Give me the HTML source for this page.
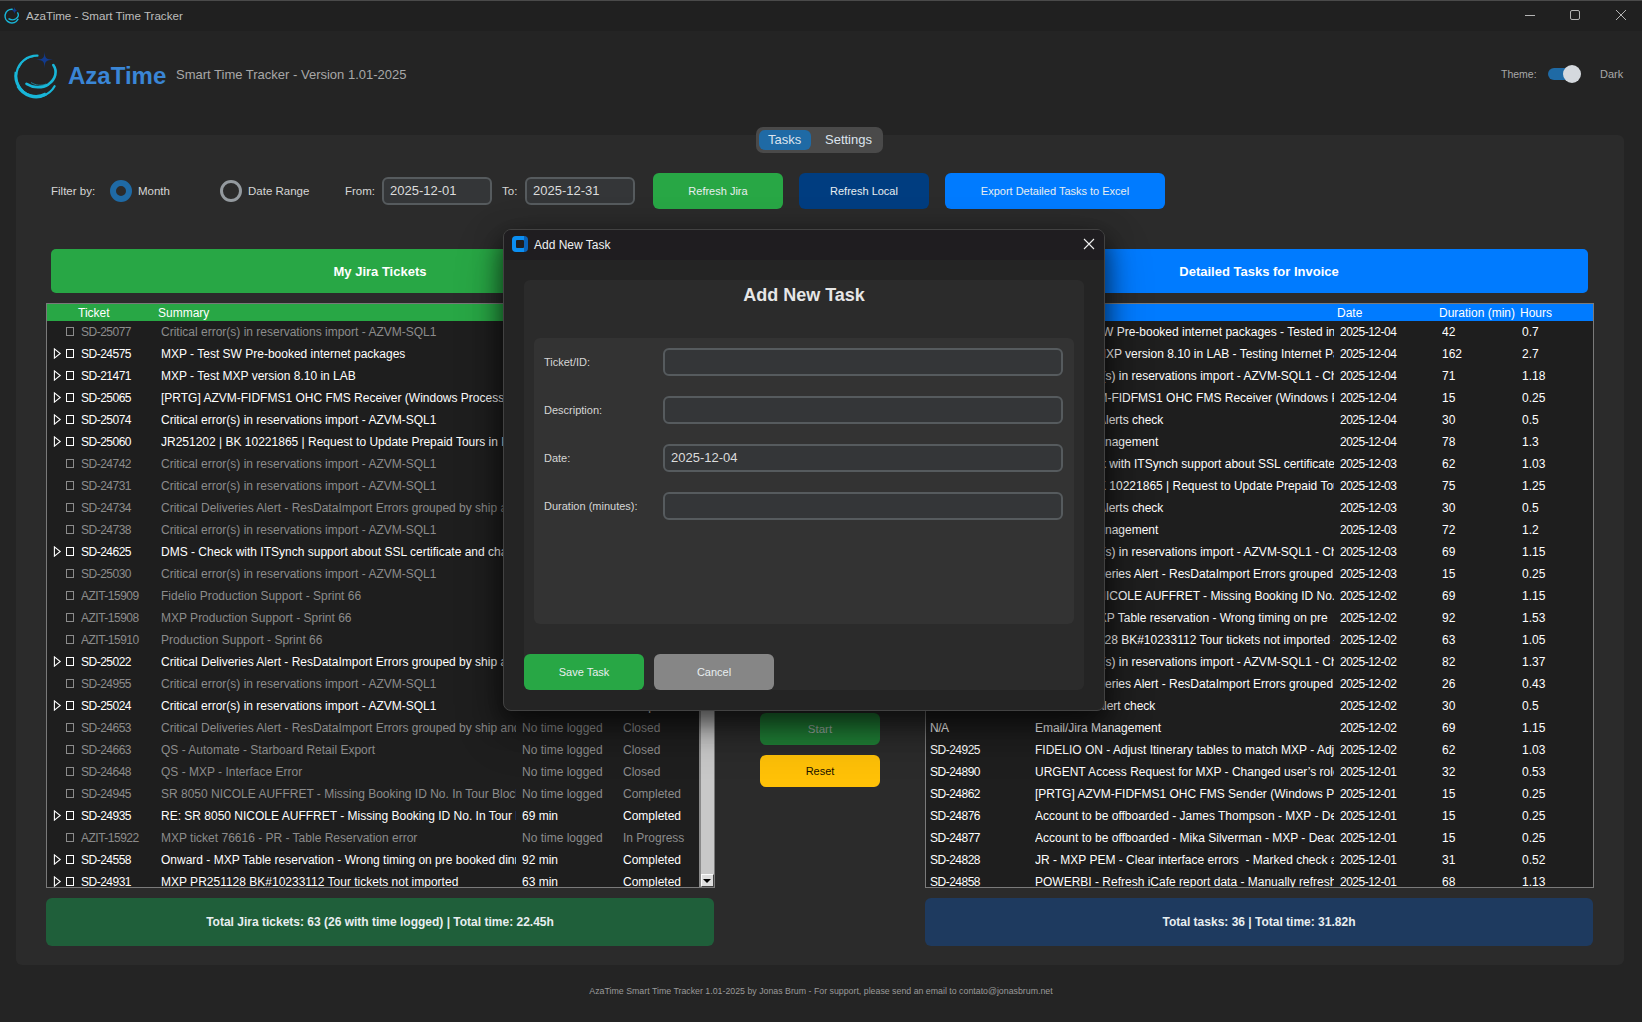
<!DOCTYPE html>
<html><head><meta charset="utf-8">
<style>
*{margin:0;padding:0;box-sizing:border-box}
html,body{width:1642px;height:1022px;overflow:hidden;background:#242424;font-family:"Liberation Sans",sans-serif;color:#d6d6d6}
.a{position:absolute}
.t{position:absolute;white-space:nowrap;line-height:1}
#titlebar{left:0;top:0;width:1642px;height:31px;background:#202020;border-top:1px solid #4a4a4a}
#main{left:16px;top:135px;width:1608px;height:830px;background:#2b2b2b;border-radius:6px}
.btn{position:absolute;border-radius:6px;color:#e8eef0;font-size:11px;display:flex;align-items:center;justify-content:center}
.entry{position:absolute;background:#343638;border:2px solid #565b5e;border-radius:6px;color:#dcdcdc;font-size:13px;padding-left:6px;padding-bottom:2px;display:flex;align-items:center}
.hdr{position:absolute;border-radius:5px;color:#fff;font-weight:bold;font-size:13px;display:flex;align-items:center;justify-content:center}
.tbl{position:absolute;background:#1e1e1e;border:1px solid #7a7a7a;overflow:hidden}
.th{position:absolute;left:0;top:0;right:0;height:17px;color:#fff;font-size:12px}
.row{position:absolute;left:0;right:0;height:22px;font-size:12px;color:#fff}
.row.g{color:#8c8c8c}
.row span.n{letter-spacing:-0.5px}
.row span{position:absolute;top:5px;white-space:pre;overflow:hidden;line-height:13px}
.arr{position:absolute;left:6px;top:5px;width:9px;height:11px}
.cb{position:absolute;left:19px;top:6px;width:8px;height:9px;border:1px solid #fff}
.g .cb{border-color:#8c8c8c}
.sb{position:absolute;left:652px;top:0;width:16px;bottom:0;background:#c8c8c8;border-left:2px solid #8a8a8a;border-right:1px solid #f0f0f0}
.sbdn{position:absolute;left:0;right:0;bottom:0;height:13px;background:#dedede;border-left:1px solid #fafafa;border-top:1px solid #fafafa;border-right:1px solid #404040;border-bottom:1px solid #404040}
.sbdn:after{content:"";position:absolute;left:1px;top:4px;border-top:4px solid #000;border-left:4px solid transparent;border-right:4px solid transparent}
.total{position:absolute;border-radius:6px;color:#e8eef0;font-weight:bold;font-size:12px;display:flex;align-items:center;justify-content:center}
</style></head>
<body>
<div id="titlebar" class="a"></div>
<div class="t" style="left:26px;top:10px;font-size:11.6px;color:#bdbdbd">AzaTime - Smart Time Tracker</div>

<svg class="a" style="left:10px;top:46px" width="54" height="54" viewBox="0 0 54 54">
<path d="M27.5 9.6 A20.5 20.5 0 1 0 44.6 40.2" fill="none" stroke="#18b6d8" stroke-width="2.2" stroke-linecap="round"/>
<path d="M8 40 A20.5 20.5 0 0 0 36 48" fill="none" stroke="#18b6d8" stroke-width="3.4"/>
<path d="M6 26 A20.5 20.5 0 0 0 9 41" fill="none" stroke="#18b6d8" stroke-width="2.8"/>
<path d="M24 10.6 A19 19 0 0 0 9 22" fill="none" stroke="#18b6d8" stroke-width="1" opacity="0.8"/>
<path d="M43.3 19 C47.5 25 46 33 38.5 38.3 C32 42.6 23.5 42.2 16.5 37.8" fill="none" stroke="#18b6d8" stroke-width="2.6" stroke-linecap="round"/>
<path d="M21 36.5 C26 39.5 31 40 36 38" fill="none" stroke="#18b6d8" stroke-width="0.9" opacity="0.7"/>
<path d="M34.6 5.2 C34.8 12.2 36.1 13.5 43 13.7 C36.1 13.9 34.8 15.2 34.6 22.2 C34.4 15.2 33.1 13.9 26.2 13.7 C33.1 13.5 34.4 12.2 34.6 5.2Z" fill="#123a8c"/>
</svg>
<svg class="a" style="left:3px;top:6px" width="18" height="18" viewBox="0 0 54 54">
<path d="M27.5 9.6 A20.5 20.5 0 1 0 44.6 40.2" fill="none" stroke="#18b6d8" stroke-width="4.5" stroke-linecap="round"/>
<path d="M43.3 19 C47.5 25 46 33 38.5 38.3 C32 42.6 23.5 42.2 16.5 37.8" fill="none" stroke="#18b6d8" stroke-width="4"/>
<path d="M34.6 3 Q35.5 12.8 44 13.7 Q35.5 14.6 34.6 24 Q33.7 14.6 25 13.7 Q33.7 12.8 34.6 3Z" fill="#123a8c"/>
</svg>
<div class="t" style="left:68px;top:64px;font-size:24px;font-weight:bold;color:#3a86d6">AzaTime</div>
<div class="t" style="left:176px;top:68px;font-size:13px;color:#a8a8a8">Smart Time Tracker - Version 1.01-2025</div>

<div class="t" style="left:1501px;top:69px;font-size:10.5px;color:#a8a8a8">Theme:</div>
<div class="a" style="left:1548px;top:68px;width:32px;height:12px;border-radius:6px;background:#1f6aa5"></div>
<div class="a" style="left:1563px;top:65px;width:18px;height:18px;border-radius:9px;background:#d5d9de"></div>
<div class="t" style="left:1600px;top:69px;font-size:11px;color:#a8a8a8">Dark</div>

<svg class="a" style="left:1520px;top:5px" width="112" height="20" viewBox="0 0 112 20">
<path d="M5 10.5H15" stroke="#b4b4b4" stroke-width="1"/>
<rect x="50.5" y="5.5" width="9" height="9" rx="1.5" fill="none" stroke="#b4b4b4" stroke-width="1"/>
<path d="M96 5L106 15M106 5L96 15" stroke="#b4b4b4" stroke-width="1"/>
</svg>
<div id="main" class="a"></div>
<div class="a" style="left:756px;top:127px;width:127px;height:26px;border-radius:7px;background:#4a4a4a"></div>
<div class="a" style="left:759px;top:130px;width:52px;height:20px;border-radius:6px;background:#1f6aa5"></div>
<div class="t" style="left:768px;top:133px;font-size:13px;color:#dce4ee">Tasks</div>
<div class="t" style="left:825px;top:133px;font-size:13px;color:#dce4ee">Settings</div>

<!-- filter row -->
<div class="t" style="left:51px;top:186px;font-size:11.5px;color:#d6d6d6">Filter by:</div>
<div class="a" style="left:110px;top:180px;width:22px;height:22px;border-radius:11px;border:6px solid #1f6aa5"></div>
<div class="t" style="left:138px;top:186px;font-size:11.5px;color:#d6d6d6">Month</div>
<div class="a" style="left:220px;top:180px;width:22px;height:22px;border-radius:11px;border:3px solid #949a9f"></div>
<div class="t" style="left:248px;top:186px;font-size:11.5px;color:#d6d6d6">Date Range</div>
<div class="t" style="left:345px;top:186px;font-size:11.5px;color:#d6d6d6">From:</div>
<div class="entry" style="left:382px;top:177px;width:110px;height:28px">2025-12-01</div>
<div class="t" style="left:502px;top:186px;font-size:11.5px;color:#d6d6d6">To:</div>
<div class="entry" style="left:525px;top:177px;width:110px;height:28px">2025-12-31</div>
<div class="btn" style="left:653px;top:173px;width:130px;height:36px;background:#28a745">Refresh Jira</div>
<div class="btn" style="left:799px;top:173px;width:130px;height:36px;background:#003d80">Refresh Local</div>
<div class="btn" style="left:945px;top:173px;width:220px;height:36px;background:#007bff">Export Detailed Tasks to Excel</div>

<div class="hdr" style="left:51px;top:249px;width:658px;height:44px;background:#28a745">My Jira Tickets</div>
<div class="hdr" style="left:930px;top:249px;width:658px;height:44px;background:#007bff">Detailed Tasks for Invoice</div>

<div class="tbl" style="left:46px;top:303px;width:669px;height:585px">
<div class="th" style="background:#28a745"><span class="t" style="left:31px;top:3px">Ticket</span><span class="t" style="left:111px;top:3px">Summary</span></div>
<div class="row g" style="top:17px"><i class="cb"></i><span class="n" style="left:34px;width:76px">SD-25077</span><span class="sm" style="left:114px;width:355px">Critical error(s) in reservations import - AZVM-SQL1</span><span style="left:475px;width:100px">No time logged</span><span style="left:576px;width:90px">Closed</span></div>
<div class="row" style="top:39px"><svg class="arr" viewBox="0 0 9 11"><path d="M1.4 0.9L7.2 5.5L1.4 10.1Z" fill="none" stroke="#fff" stroke-width="1.1"/></svg><i class="cb"></i><span class="n" style="left:34px;width:76px">SD-24575</span><span class="sm" style="left:114px;width:355px">MXP - Test SW Pre-booked internet packages</span><span style="left:475px;width:100px">42 min</span><span style="left:576px;width:90px">In Progress</span></div>
<div class="row" style="top:61px"><svg class="arr" viewBox="0 0 9 11"><path d="M1.4 0.9L7.2 5.5L1.4 10.1Z" fill="none" stroke="#fff" stroke-width="1.1"/></svg><i class="cb"></i><span class="n" style="left:34px;width:76px">SD-21471</span><span class="sm" style="left:114px;width:355px">MXP - Test MXP version 8.10 in LAB</span><span style="left:475px;width:100px">162 min</span><span style="left:576px;width:90px">In Progress</span></div>
<div class="row" style="top:83px"><svg class="arr" viewBox="0 0 9 11"><path d="M1.4 0.9L7.2 5.5L1.4 10.1Z" fill="none" stroke="#fff" stroke-width="1.1"/></svg><i class="cb"></i><span class="n" style="left:34px;width:76px">SD-25065</span><span class="sm" style="left:114px;width:355px">[PRTG] AZVM-FIDFMS1 OHC FMS Receiver (Windows Process) Down</span><span style="left:475px;width:100px">15 min</span><span style="left:576px;width:90px">Completed</span></div>
<div class="row" style="top:105px"><svg class="arr" viewBox="0 0 9 11"><path d="M1.4 0.9L7.2 5.5L1.4 10.1Z" fill="none" stroke="#fff" stroke-width="1.1"/></svg><i class="cb"></i><span class="n" style="left:34px;width:76px">SD-25074</span><span class="sm" style="left:114px;width:355px">Critical error(s) in reservations import - AZVM-SQL1</span><span style="left:475px;width:100px">71 min</span><span style="left:576px;width:90px">Completed</span></div>
<div class="row" style="top:127px"><svg class="arr" viewBox="0 0 9 11"><path d="M1.4 0.9L7.2 5.5L1.4 10.1Z" fill="none" stroke="#fff" stroke-width="1.1"/></svg><i class="cb"></i><span class="n" style="left:34px;width:76px">SD-25060</span><span class="sm" style="left:114px;width:355px">JR251202 | BK 10221865 | Request to Update Prepaid Tours in PowerBI</span><span style="left:475px;width:100px">75 min</span><span style="left:576px;width:90px">Completed</span></div>
<div class="row g" style="top:149px"><i class="cb"></i><span class="n" style="left:34px;width:76px">SD-24742</span><span class="sm" style="left:114px;width:355px">Critical error(s) in reservations import - AZVM-SQL1</span><span style="left:475px;width:100px">No time logged</span><span style="left:576px;width:90px">Closed</span></div>
<div class="row g" style="top:171px"><i class="cb"></i><span class="n" style="left:34px;width:76px">SD-24731</span><span class="sm" style="left:114px;width:355px">Critical error(s) in reservations import - AZVM-SQL1</span><span style="left:475px;width:100px">No time logged</span><span style="left:576px;width:90px">Closed</span></div>
<div class="row g" style="top:193px"><i class="cb"></i><span class="n" style="left:34px;width:76px">SD-24734</span><span class="sm" style="left:114px;width:355px">Critical Deliveries Alert - ResDataImport Errors grouped by ship and</span><span style="left:475px;width:100px">No time logged</span><span style="left:576px;width:90px">Closed</span></div>
<div class="row g" style="top:215px"><i class="cb"></i><span class="n" style="left:34px;width:76px">SD-24738</span><span class="sm" style="left:114px;width:355px">Critical error(s) in reservations import - AZVM-SQL1</span><span style="left:475px;width:100px">No time logged</span><span style="left:576px;width:90px">Closed</span></div>
<div class="row" style="top:237px"><svg class="arr" viewBox="0 0 9 11"><path d="M1.4 0.9L7.2 5.5L1.4 10.1Z" fill="none" stroke="#fff" stroke-width="1.1"/></svg><i class="cb"></i><span class="n" style="left:34px;width:76px">SD-24625</span><span class="sm" style="left:114px;width:355px">DMS - Check with ITSynch support about SSL certificate and change</span><span style="left:475px;width:100px">62 min</span><span style="left:576px;width:90px">Completed</span></div>
<div class="row g" style="top:259px"><i class="cb"></i><span class="n" style="left:34px;width:76px">SD-25030</span><span class="sm" style="left:114px;width:355px">Critical error(s) in reservations import - AZVM-SQL1</span><span style="left:475px;width:100px">No time logged</span><span style="left:576px;width:90px">Closed</span></div>
<div class="row g" style="top:281px"><i class="cb"></i><span class="n" style="left:34px;width:76px">AZIT-15909</span><span class="sm" style="left:114px;width:355px">Fidelio Production Support - Sprint 66</span><span style="left:475px;width:100px">No time logged</span><span style="left:576px;width:90px">In Progress</span></div>
<div class="row g" style="top:303px"><i class="cb"></i><span class="n" style="left:34px;width:76px">AZIT-15908</span><span class="sm" style="left:114px;width:355px">MXP Production Support - Sprint 66</span><span style="left:475px;width:100px">No time logged</span><span style="left:576px;width:90px">In Progress</span></div>
<div class="row g" style="top:325px"><i class="cb"></i><span class="n" style="left:34px;width:76px">AZIT-15910</span><span class="sm" style="left:114px;width:355px">Production Support - Sprint 66</span><span style="left:475px;width:100px">No time logged</span><span style="left:576px;width:90px">In Progress</span></div>
<div class="row" style="top:347px"><svg class="arr" viewBox="0 0 9 11"><path d="M1.4 0.9L7.2 5.5L1.4 10.1Z" fill="none" stroke="#fff" stroke-width="1.1"/></svg><i class="cb"></i><span class="n" style="left:34px;width:76px">SD-25022</span><span class="sm" style="left:114px;width:355px">Critical Deliveries Alert - ResDataImport Errors grouped by ship and</span><span style="left:475px;width:100px">15 min</span><span style="left:576px;width:90px">Completed</span></div>
<div class="row g" style="top:369px"><i class="cb"></i><span class="n" style="left:34px;width:76px">SD-24955</span><span class="sm" style="left:114px;width:355px">Critical error(s) in reservations import - AZVM-SQL1</span><span style="left:475px;width:100px">No time logged</span><span style="left:576px;width:90px">Closed</span></div>
<div class="row" style="top:391px"><svg class="arr" viewBox="0 0 9 11"><path d="M1.4 0.9L7.2 5.5L1.4 10.1Z" fill="none" stroke="#fff" stroke-width="1.1"/></svg><i class="cb"></i><span class="n" style="left:34px;width:76px">SD-25024</span><span class="sm" style="left:114px;width:355px">Critical error(s) in reservations import - AZVM-SQL1</span><span style="left:475px;width:100px">82 min</span><span style="left:576px;width:90px">Completed</span></div>
<div class="row g" style="top:413px"><i class="cb"></i><span class="n" style="left:34px;width:76px">SD-24653</span><span class="sm" style="left:114px;width:355px">Critical Deliveries Alert - ResDataImport Errors grouped by ship and</span><span style="left:475px;width:100px">No time logged</span><span style="left:576px;width:90px">Closed</span></div>
<div class="row g" style="top:435px"><i class="cb"></i><span class="n" style="left:34px;width:76px">SD-24663</span><span class="sm" style="left:114px;width:355px">QS - Automate - Starboard Retail Export</span><span style="left:475px;width:100px">No time logged</span><span style="left:576px;width:90px">Closed</span></div>
<div class="row g" style="top:457px"><i class="cb"></i><span class="n" style="left:34px;width:76px">SD-24648</span><span class="sm" style="left:114px;width:355px">QS - MXP - Interface Error</span><span style="left:475px;width:100px">No time logged</span><span style="left:576px;width:90px">Closed</span></div>
<div class="row g" style="top:479px"><i class="cb"></i><span class="n" style="left:34px;width:76px">SD-24945</span><span class="sm" style="left:114px;width:355px">SR 8050 NICOLE AUFFRET - Missing Booking ID No. In Tour Block Manager</span><span style="left:475px;width:100px">No time logged</span><span style="left:576px;width:90px">Completed</span></div>
<div class="row" style="top:501px"><svg class="arr" viewBox="0 0 9 11"><path d="M1.4 0.9L7.2 5.5L1.4 10.1Z" fill="none" stroke="#fff" stroke-width="1.1"/></svg><i class="cb"></i><span class="n" style="left:34px;width:76px">SD-24935</span><span class="sm" style="left:114px;width:355px">RE: SR 8050 NICOLE AUFFRET - Missing Booking ID No. In Tour Block Manager</span><span style="left:475px;width:100px">69 min</span><span style="left:576px;width:90px">Completed</span></div>
<div class="row g" style="top:523px"><i class="cb"></i><span class="n" style="left:34px;width:76px">AZIT-15922</span><span class="sm" style="left:114px;width:355px">MXP ticket 76616 - PR - Table Reservation error</span><span style="left:475px;width:100px">No time logged</span><span style="left:576px;width:90px">In Progress</span></div>
<div class="row" style="top:545px"><svg class="arr" viewBox="0 0 9 11"><path d="M1.4 0.9L7.2 5.5L1.4 10.1Z" fill="none" stroke="#fff" stroke-width="1.1"/></svg><i class="cb"></i><span class="n" style="left:34px;width:76px">SD-24558</span><span class="sm" style="left:114px;width:355px">Onward - MXP Table reservation - Wrong timing on pre booked dinner</span><span style="left:475px;width:100px">92 min</span><span style="left:576px;width:90px">Completed</span></div>
<div class="row" style="top:567px"><svg class="arr" viewBox="0 0 9 11"><path d="M1.4 0.9L7.2 5.5L1.4 10.1Z" fill="none" stroke="#fff" stroke-width="1.1"/></svg><i class="cb"></i><span class="n" style="left:34px;width:76px">SD-24931</span><span class="sm" style="left:114px;width:355px">MXP PR251128 BK#10233112 Tour tickets not imported</span><span style="left:475px;width:100px">63 min</span><span style="left:576px;width:90px">Completed</span></div>
<div class="sb"><div class="sbdn"></div></div>
</div>
<div class="tbl" style="left:925px;top:303px;width:669px;height:585px">
<div class="th" style="background:#007bff"><span class="t" style="left:411px;top:3px">Date</span><span class="t" style="left:513px;top:3px">Duration (min)</span><span class="t" style="left:594px;top:3px">Hours</span></div>
<div class="row" style="top:17px"><span class="n" style="left:4px;width:100px">SD-24575</span><span class="sm" style="left:176.0px;width:232.0px">W Pre-booked internet packages - Tested in</span><span class="n" style="left:414px;width:100px">2025-12-04</span><span style="left:516px;width:70px">42</span><span style="left:596px;width:70px">0.7</span></div>
<div class="row" style="top:39px"><span class="n" style="left:4px;width:100px">SD-21471</span><span class="sm" style="left:170.0px;width:238.0px">MXP version 8.10 in LAB - Testing Internet Pa</span><span class="n" style="left:414px;width:100px">2025-12-04</span><span style="left:516px;width:70px">162</span><span style="left:596px;width:70px">2.7</span></div>
<div class="row" style="top:61px"><span class="n" style="left:4px;width:100px">SD-25074</span><span class="sm" style="left:175.5px;width:232.5px">(s) in reservations import - AZVM-SQL1 - Ch</span><span class="n" style="left:414px;width:100px">2025-12-04</span><span style="left:516px;width:70px">71</span><span style="left:596px;width:70px">1.18</span></div>
<div class="row" style="top:83px"><span class="n" style="left:4px;width:100px">SD-25065</span><span class="sm" style="left:171.4px;width:236.6px">M-FIDFMS1 OHC FMS Receiver (Windows Pr</span><span class="n" style="left:414px;width:100px">2025-12-04</span><span style="left:516px;width:70px">15</span><span style="left:596px;width:70px">0.25</span></div>
<div class="row" style="top:105px"><span class="n" style="left:4px;width:100px">N/A</span><span class="sm" style="left:172.0px;width:236.0px">Alerts check</span><span class="n" style="left:414px;width:100px">2025-12-04</span><span style="left:516px;width:70px">30</span><span style="left:596px;width:70px">0.5</span></div>
<div class="row" style="top:127px"><span class="n" style="left:4px;width:100px">N/A</span><span class="sm" style="left:172.3px;width:235.7px">anagement</span><span class="n" style="left:414px;width:100px">2025-12-04</span><span style="left:516px;width:70px">78</span><span style="left:596px;width:70px">1.3</span></div>
<div class="row" style="top:149px"><span class="n" style="left:4px;width:100px">SD-24625</span><span class="sm" style="left:174.0px;width:234.0px">k with ITSynch support about SSL certificate</span><span class="n" style="left:414px;width:100px">2025-12-03</span><span style="left:516px;width:70px">62</span><span style="left:596px;width:70px">1.03</span></div>
<div class="row" style="top:171px"><span class="n" style="left:4px;width:100px">SD-25060</span><span class="sm" style="left:172.0px;width:236.0px">K 10221865 | Request to Update Prepaid Tour</span><span class="n" style="left:414px;width:100px">2025-12-03</span><span style="left:516px;width:70px">75</span><span style="left:596px;width:70px">1.25</span></div>
<div class="row" style="top:193px"><span class="n" style="left:4px;width:100px">N/A</span><span class="sm" style="left:172.0px;width:236.0px">Alerts check</span><span class="n" style="left:414px;width:100px">2025-12-03</span><span style="left:516px;width:70px">30</span><span style="left:596px;width:70px">0.5</span></div>
<div class="row" style="top:215px"><span class="n" style="left:4px;width:100px">N/A</span><span class="sm" style="left:172.3px;width:235.7px">anagement</span><span class="n" style="left:414px;width:100px">2025-12-03</span><span style="left:516px;width:70px">72</span><span style="left:596px;width:70px">1.2</span></div>
<div class="row" style="top:237px"><span class="n" style="left:4px;width:100px">SD-25024</span><span class="sm" style="left:175.5px;width:232.5px">(s) in reservations import - AZVM-SQL1 - Ch</span><span class="n" style="left:414px;width:100px">2025-12-03</span><span style="left:516px;width:70px">69</span><span style="left:596px;width:70px">1.15</span></div>
<div class="row" style="top:259px"><span class="n" style="left:4px;width:100px">SD-25022</span><span class="sm" style="left:173.0px;width:235.0px">veries Alert - ResDataImport Errors grouped b</span><span class="n" style="left:414px;width:100px">2025-12-03</span><span style="left:516px;width:70px">15</span><span style="left:596px;width:70px">0.25</span></div>
<div class="row" style="top:281px"><span class="n" style="left:4px;width:100px">SD-24935</span><span class="sm" style="left:171.3px;width:236.7px">NICOLE AUFFRET - Missing Booking ID No. I</span><span class="n" style="left:414px;width:100px">2025-12-02</span><span style="left:516px;width:70px">69</span><span style="left:596px;width:70px">1.15</span></div>
<div class="row" style="top:303px"><span class="n" style="left:4px;width:100px">SD-24558</span><span class="sm" style="left:172.8px;width:235.2px">XP Table reservation - Wrong timing on pre</span><span class="n" style="left:414px;width:100px">2025-12-02</span><span style="left:516px;width:70px">92</span><span style="left:596px;width:70px">1.53</span></div>
<div class="row" style="top:325px"><span class="n" style="left:4px;width:100px">SD-24931</span><span class="sm" style="left:171.8px;width:236.2px">128 BK#10233112 Tour tickets not imported -</span><span class="n" style="left:414px;width:100px">2025-12-02</span><span style="left:516px;width:70px">63</span><span style="left:596px;width:70px">1.05</span></div>
<div class="row" style="top:347px"><span class="n" style="left:4px;width:100px">SD-25024</span><span class="sm" style="left:175.5px;width:232.5px">(s) in reservations import - AZVM-SQL1 - Ch</span><span class="n" style="left:414px;width:100px">2025-12-02</span><span style="left:516px;width:70px">82</span><span style="left:596px;width:70px">1.37</span></div>
<div class="row" style="top:369px"><span class="n" style="left:4px;width:100px">SD-25022</span><span class="sm" style="left:173.0px;width:235.0px">veries Alert - ResDataImport Errors grouped b</span><span class="n" style="left:414px;width:100px">2025-12-02</span><span style="left:516px;width:70px">26</span><span style="left:596px;width:70px">0.43</span></div>
<div class="row" style="top:391px"><span class="n" style="left:4px;width:100px">N/A</span><span class="sm" style="left:170.0px;width:238.0px">Alert check</span><span class="n" style="left:414px;width:100px">2025-12-02</span><span style="left:516px;width:70px">30</span><span style="left:596px;width:70px">0.5</span></div>
<div class="row" style="top:413px"><span class="n" style="left:4px;width:100px">N/A</span><span class="sm" style="left:109px;width:299px">Email/Jira Management</span><span class="n" style="left:414px;width:100px">2025-12-02</span><span style="left:516px;width:70px">69</span><span style="left:596px;width:70px">1.15</span></div>
<div class="row" style="top:435px"><span class="n" style="left:4px;width:100px">SD-24925</span><span class="sm" style="left:109px;width:299px">FIDELIO ON - Adjust Itinerary tables to match MXP - Adjusted</span><span class="n" style="left:414px;width:100px">2025-12-02</span><span style="left:516px;width:70px">62</span><span style="left:596px;width:70px">1.03</span></div>
<div class="row" style="top:457px"><span class="n" style="left:4px;width:100px">SD-24890</span><span class="sm" style="left:109px;width:299px">URGENT Access Request for MXP - Changed user’s role to admin</span><span class="n" style="left:414px;width:100px">2025-12-01</span><span style="left:516px;width:70px">32</span><span style="left:596px;width:70px">0.53</span></div>
<div class="row" style="top:479px"><span class="n" style="left:4px;width:100px">SD-24862</span><span class="sm" style="left:109px;width:299px">[PRTG] AZVM-FIDFMS1 OHC FMS Sender (Windows Process) Down</span><span class="n" style="left:414px;width:100px">2025-12-01</span><span style="left:516px;width:70px">15</span><span style="left:596px;width:70px">0.25</span></div>
<div class="row" style="top:501px"><span class="n" style="left:4px;width:100px">SD-24876</span><span class="sm" style="left:109px;width:299px">Account to be offboarded - James Thompson - MXP - Deactivated</span><span class="n" style="left:414px;width:100px">2025-12-01</span><span style="left:516px;width:70px">15</span><span style="left:596px;width:70px">0.25</span></div>
<div class="row" style="top:523px"><span class="n" style="left:4px;width:100px">SD-24877</span><span class="sm" style="left:109px;width:299px">Account to be offboarded - Mika Silverman - MXP - Deactivated</span><span class="n" style="left:414px;width:100px">2025-12-01</span><span style="left:516px;width:70px">15</span><span style="left:596px;width:70px">0.25</span></div>
<div class="row" style="top:545px"><span class="n" style="left:4px;width:100px">SD-24828</span><span class="sm" style="left:109px;width:299px">JR - MXP PEM - Clear interface errors  - Marked check as done</span><span class="n" style="left:414px;width:100px">2025-12-01</span><span style="left:516px;width:70px">31</span><span style="left:596px;width:70px">0.52</span></div>
<div class="row" style="top:567px"><span class="n" style="left:4px;width:100px">SD-24858</span><span class="sm" style="left:109px;width:299px">POWERBI - Refresh iCafe report data - Manually refreshed data</span><span class="n" style="left:414px;width:100px">2025-12-01</span><span style="left:516px;width:70px">68</span><span style="left:596px;width:70px">1.13</span></div>
</div>

<div class="btn" style="left:760px;top:713px;width:120px;height:32px;background:#1f7d35;color:#9aa8a0;font-size:11.5px">Start</div>
<div class="btn" style="left:760px;top:755px;width:120px;height:32px;background:#ffc107;color:#1a1200;font-size:11px">Reset</div>

<div class="total" style="left:46px;top:898px;width:668px;height:48px;background:#1f5f3a">Total Jira tickets: 63 (26 with time logged) | Total time: 22.45h</div>
<div class="total" style="left:925px;top:898px;width:668px;height:48px;background:#1e3a5f">Total tasks: 36 | Total time: 31.82h</div>

<div class="t" style="left:0;width:1642px;text-align:center;top:987px;font-size:8.8px;color:#9a9a9a">AzaTime Smart Time Tracker 1.01-2025 by Jonas Brum - For support, please send an email to contato@jonasbrum.net</div>

<div class="a" style="left:503px;top:229px;width:602px;height:482px;border-radius:8px;background:#242424;border:1px solid #424242;box-shadow:0 10px 24px 2px rgba(0,0,0,0.55),0 18px 48px rgba(0,0,0,0.3);overflow:hidden">
  <div class="a" style="left:0;top:0;width:600px;height:30px;background:#1f1d20"></div>
</div>
<div class="a" style="left:512px;top:236px;width:16px;height:16px;border-radius:4px;background:linear-gradient(90deg,#0b8ef2 76%,#0a62b8 76%)"></div>
<div class="a" style="left:516px;top:240px;width:8px;height:8px;border-radius:1px;background:#1f1d20"></div>
<div class="t" style="left:534px;top:239px;font-size:12px;color:#f0f0f0">Add New Task</div>
<svg class="a" style="left:1083px;top:238px" width="12" height="12" viewBox="0 0 12 12"><path d="M1 1L11 11M11 1L1 11" stroke="#f0f0f0" stroke-width="1.1"/></svg>
<div class="a" style="left:524px;top:280px;width:560px;height:410px;border-radius:6px;background:#2b2b2b"></div>
<div class="t" style="left:524px;width:560px;text-align:center;top:286px;font-size:18px;font-weight:bold;color:#e6e6e6">Add New Task</div>
<div class="a" style="left:534px;top:338px;width:540px;height:286px;border-radius:6px;background:#333333"></div>
<div class="t" style="left:544px;top:357px;font-size:11px;color:#d6d6d6">Ticket/ID:</div>
<div class="t" style="left:544px;top:405px;font-size:11px;color:#d6d6d6">Description:</div>
<div class="t" style="left:544px;top:453px;font-size:11px;color:#d6d6d6">Date:</div>
<div class="t" style="left:544px;top:501px;font-size:11px;color:#d6d6d6">Duration (minutes):</div>
<div class="entry" style="left:663px;top:348px;width:400px;height:28px"></div>
<div class="entry" style="left:663px;top:396px;width:400px;height:28px"></div>
<div class="entry" style="left:663px;top:444px;width:400px;height:28px">2025-12-04</div>
<div class="entry" style="left:663px;top:492px;width:400px;height:28px"></div>
<div class="btn" style="left:524px;top:654px;width:120px;height:36px;background:#28a745">Save Task</div>
<div class="btn" style="left:654px;top:654px;width:120px;height:36px;background:#868686">Cancel</div>

</body></html>
